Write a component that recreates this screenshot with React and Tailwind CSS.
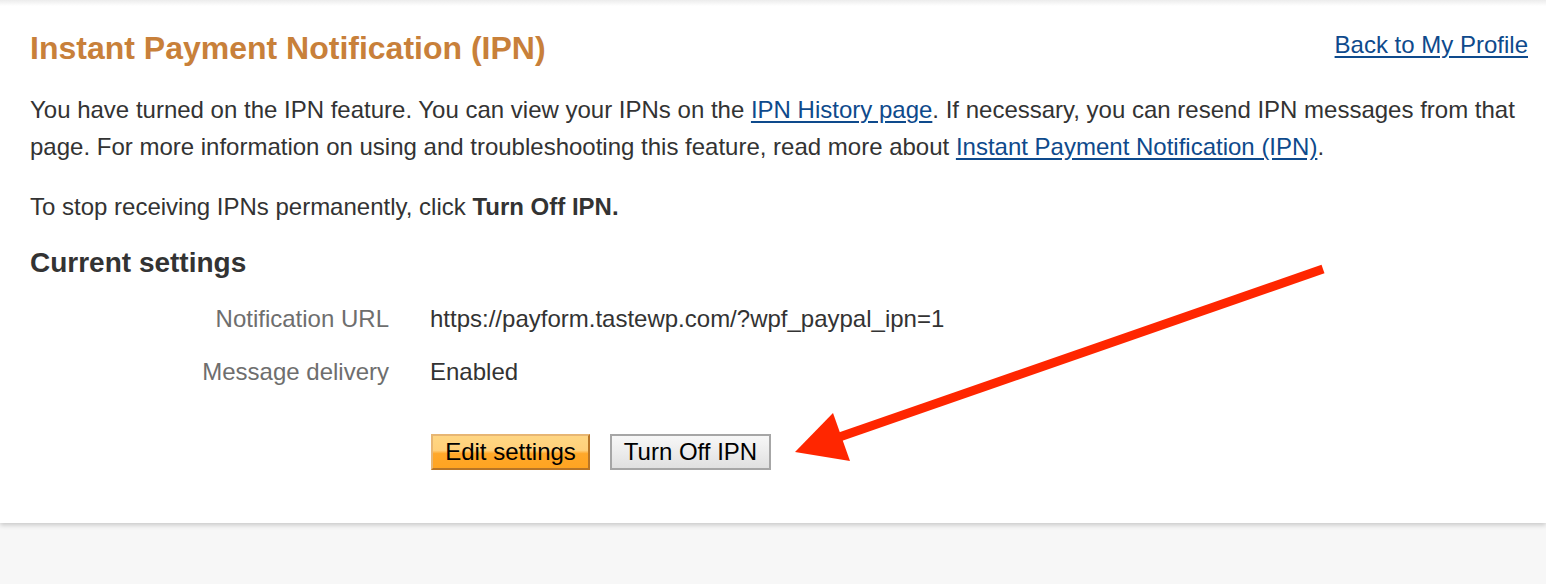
export default function App() {
  return (
    <div className="relative min-h-[584px] bg-[#f7f7f7] font-['Liberation_Sans',Arial,Helvetica,sans-serif] text-[#333]">
      <div className="relative bg-white shadow-[0_2px_5px_rgba(0,0,0,0.2)] pl-[30px] pr-[18px] pt-[28px] pb-[54px] h-[523px]">
        <div className="absolute left-0 right-0 top-0 h-[6px] bg-gradient-to-b from-[#ececec] to-white" />
        <div className="relative flex items-start justify-between">
          <h1 className="text-[32px] leading-[40px] font-bold text-[#c8803a]">Instant Payment Notification (IPN)</h1>
          <a href="#" className="mt-[2px] text-[24px] leading-[30px] text-[#0e4a8c] underline underline-offset-[3px]">Back to My Profile</a>
        </div>
        <p className="mt-[23px] text-[24px] leading-[37px] pr-[10px]">
          You have turned on the IPN feature. You can view your IPNs on the{" "}
          <a href="#" className="text-[#0e4a8c] underline underline-offset-[3px]">IPN History page</a>. If necessary, you can resend IPN messages from that page. For more information on using and troubleshooting this feature, read more about{" "}
          <a href="#" className="text-[#0e4a8c] underline underline-offset-[3px]">Instant Payment Notification (IPN)</a>.
        </p>
        <p className="mt-[23px] text-[24px] leading-[37px]">
          To stop receiving IPNs permanently, click <b>Turn Off IPN.</b>
        </p>
        <h2 className="mt-[21px] text-[28px] leading-[34px] font-bold text-[#333]">Current settings</h2>
        <div className="mt-[20px] flex flex-col gap-[16px] text-[24px] leading-[37px]">
          <div className="flex gap-[41px]">
            <div className="w-[359px] text-right text-[#6e6e6e]">Notification URL</div>
            <div>https://payform.tastewp.com/?wpf_paypal_ipn=1</div>
          </div>
          <div className="flex gap-[41px]">
            <div className="w-[359px] text-right text-[#6e6e6e]">Message delivery</div>
            <div>Enabled</div>
          </div>
        </div>
        <div className="mt-[44px] ml-[401px] flex gap-[20px]">
          <button className="h-[36px] w-[159px] border-2 border-t-[#e7b673] border-l-[#e7b673] border-r-[#b87526] border-b-[#b87526] bg-[linear-gradient(#ffd683,#ffd07a_45%,#ffa82a_55%,#ffa421)] text-[24px] leading-[30px] text-black">
            Edit settings
          </button>
          <button className="h-[36px] w-[161px] border-2 border-[#a6a6a6] bg-[linear-gradient(#f7f7f7,#ececec_50%,#e0e0e0)] text-[24px] leading-[30px] text-black">
            Turn Off IPN
          </button>
        </div>
      </div>
      <svg className="absolute left-0 top-0 pointer-events-none" width="1546" height="584" viewBox="0 0 1546 584">
        <line x1="1323" y1="269" x2="838" y2="437.5" stroke="#ff2600" strokeWidth="9" />
        <polygon points="795,452 833,413 850,461" fill="#ff2600" />
      </svg>
    </div>
  );
}
